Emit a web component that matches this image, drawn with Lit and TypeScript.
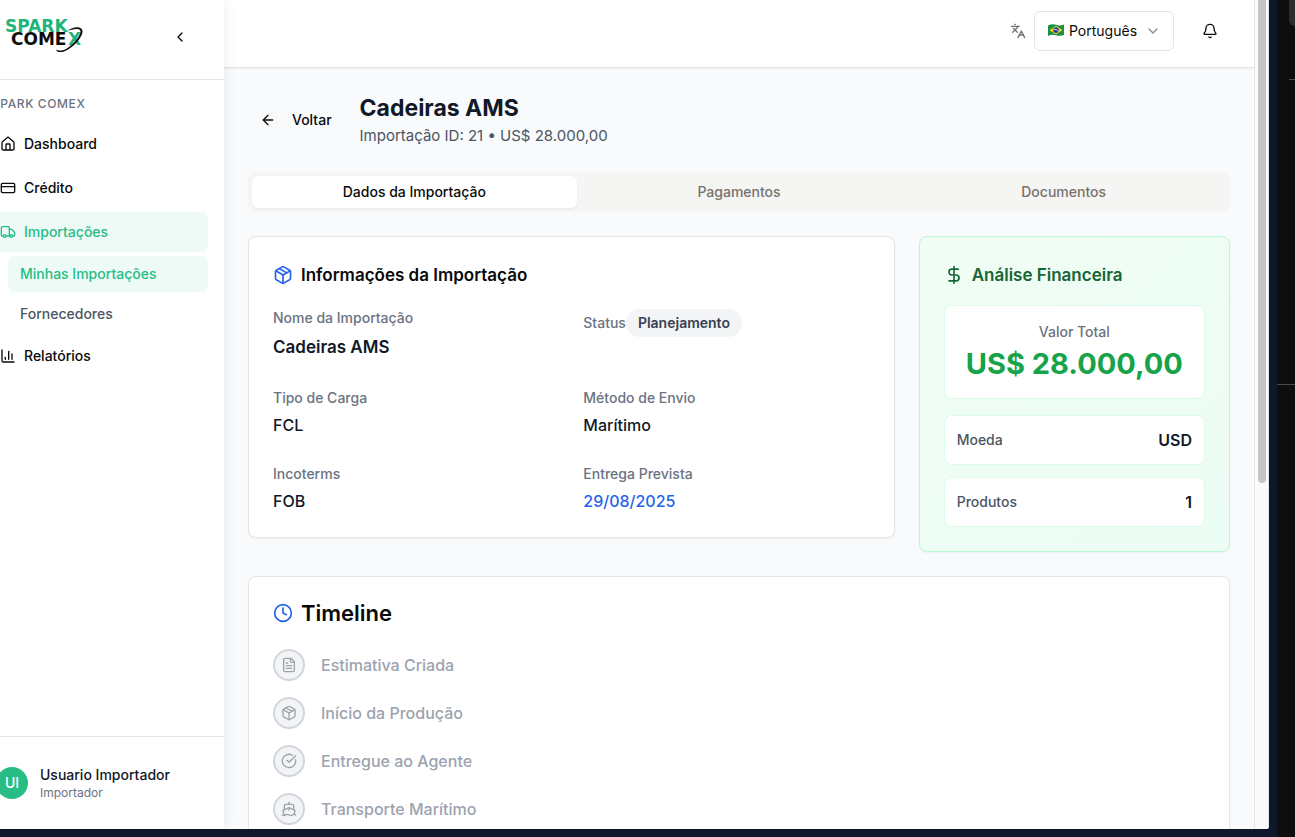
import { LitElement, html, css, svg, nothing } from "lit";
import { customElement, state } from "lit/decorators.js";

const paths = {
  house: svg`<path d="M15 21v-8a1 1 0 0 0-1-1h-4a1 1 0 0 0-1 1v8"/><path d="M3 10a2 2 0 0 1 .709-1.528l7-6a2 2 0 0 1 2.582 0l7 6A2 2 0 0 1 21 10v9a2 2 0 0 1-2 2H5a2 2 0 0 1-2-2z"/>`,
  card: svg`<rect width="20" height="14" x="2" y="5" rx="2"/><path d="M2 10h20"/>`,
  truck: svg`<path d="M14 18V6a2 2 0 0 0-2-2H4a2 2 0 0 0-2 2v11a1 1 0 0 0 1 1h2"/><path d="M15 18H9"/><path d="M19 18h2a1 1 0 0 0 1-1v-3.65a1 1 0 0 0-.22-.624l-3.48-4.35A1 1 0 0 0 17.52 8H14"/><circle cx="17" cy="18" r="2"/><circle cx="7" cy="18" r="2"/>`,
  chart: svg`<path d="M3 3v16a2 2 0 0 0 2 2h16"/><path d="M18 17V9"/><path d="M13 17V5"/><path d="M8 17v-3"/>`,
  chevronLeft: svg`<path d="m15 18-6-6 6-6"/>`,
  chevronDown: svg`<path d="m6 9 6 6 6-6"/>`,
  languages: svg`<path d="m5 8 6 6"/><path d="m4 14 6-6 2-3"/><path d="M2 5h12"/><path d="M7 2h1"/><path d="m22 22-5-10-5 10"/><path d="M14 18h6"/>`,
  bell: svg`<path d="M10.268 21a2 2 0 0 0 3.464 0"/><path d="M3.262 15.326A1 1 0 0 0 4 17h16a1 1 0 0 0 .74-1.673C19.41 13.956 18 12.499 18 8A6 6 0 0 0 6 8c0 4.499-1.411 5.956-2.738 7.326"/>`,
  arrowLeft: svg`<path d="m12 19-7-7 7-7"/><path d="M19 12H5"/>`,
  box: svg`<path d="M11 21.73a2 2 0 0 0 2 0l7-4A2 2 0 0 0 21 16V8a2 2 0 0 0-1-1.73l-7-4a2 2 0 0 0-2 0l-7 4A2 2 0 0 0 3 8v8a2 2 0 0 0 1 1.73z"/><path d="M12 22V12"/><path d="m3.3 7 8.7 5 8.7-5"/><path d="m7.5 4.27 9 5.15"/>`,
  dollar: svg`<path d="M12 2v20"/><path d="M17 5H9.5a3.5 3.5 0 0 0 0 7h5a3.5 3.5 0 0 1 0 7H6"/>`,
  clock: svg`<circle cx="12" cy="12" r="10"/><path d="M12 6v6l4 2"/>`,
  file: svg`<path d="M15 2H6a2 2 0 0 0-2 2v16a2 2 0 0 0 2 2h12a2 2 0 0 0 2-2V7Z"/><path d="M14 2v4a2 2 0 0 0 2 2h4"/><path d="M10 9H8"/><path d="M16 13H8"/><path d="M16 17H8"/>`,
  check: svg`<path d="M21.801 10A10 10 0 1 1 17 3.335"/><path d="m9 11 3 3L22 4"/>`,
  ship: svg`<path d="M12 10.189V14"/><path d="M12 2v3"/><path d="M19 13V7a2 2 0 0 0-2-2H7a2 2 0 0 0-2 2v6"/><path d="M19.38 20A11.6 11.6 0 0 0 21 14l-8.188-3.639a2 2 0 0 0-1.624 0L3 14a11.6 11.6 0 0 0 2.81 7.76"/><path d="M2 21c.6.5 1.2 1 2.5 1 2.5 0 2.5-2 5-2 1.3 0 1.9.5 2.5 1s1.2 1 2.5 1c2.5 0 2.5-2 5-2 1.3 0 1.9.5 2.5 1"/>`,
};
type IconName = keyof typeof paths;

const icon = (name: IconName, size = 16) => html`
  <svg class="icon" width=${size} height=${size} viewBox="0 0 24 24" fill="none" stroke="currentColor"
    stroke-width="2" stroke-linecap="round" stroke-linejoin="round" aria-hidden="true">${paths[name]}</svg>`;

const base = css`
  * { box-sizing: border-box; margin: 0; }
  :host { font-family: Inter, "Liberation Sans", sans-serif; }
  button, select { font: inherit; color: inherit; background: none; border: 0; padding: 0; }
  a { color: inherit; text-decoration: none; }
  ul { list-style: none; padding: 0; }
  .icon { display: block; flex: none; }
`;

@customElement("side-bar")
export class SideBar extends LitElement {
  static styles = [base, css`
    :host { display: flex; flex-direction: column; background: #fff; color: #0a0a0a; font-size: 14px; line-height: 20px; }
    .head { display: flex; align-items: center; justify-content: space-between; height: 80px; padding: 0 24px 5px; border-bottom: 1px solid #e5e5e5; }
    .toggle { display: grid; place-items: center; width: 40px; height: 40px; }
    .logo text { font: 700 17px "DejaVu Sans", sans-serif; }
    nav { flex: 1; padding: 16px; }
    h2 { font-size: 12px; line-height: 16px; font-weight: 500; color: #6b7280; padding: 0 8px; margin-bottom: 12px; letter-spacing: 0.05em; text-transform: uppercase; }
    ul { display: grid; gap: 4px; }
    .item { display: flex; align-items: center; gap: 8px; height: 40px; padding: 0 16px; border-radius: 6px; font-weight: 500; }
    .sub { margin: 4px 0 0 24px; }
    .sub .item { height: 36px; padding: 0 12px; color: #4b5563; }
    .item.active, .sub .item.active { background: #eefaf6; color: #27bd85; }
    .foot { border-top: 1px solid #e5e5e5; padding: 16px; }
    .user { display: flex; align-items: center; gap: 12px; padding: 12px; }
    .avatar { display: grid; place-items: center; width: 32px; height: 32px; border-radius: 50%; background: #27bd85; color: #fff; font-weight: 500; }
    .name { font-weight: 500; color: #111827; }
    .role { font-size: 12px; line-height: 16px; color: #6b7280; }
  `];

  render() {
    return html`
      <div class="head">
        <svg class="logo" width="92" height="40" viewBox="0 0 92 40" role="img" aria-label="Spark Comex">
          <text x="13" y="15" fill="#1fb47c">SPARK</text>
          <text x="19" y="28" fill="#0d0d0d">COME<tspan x="76" fill="#1fb47c">X</tspan></text>
          <path d="M75 14C81 9.500 90 8.500 90.500 14C91 21 78 34 70 35C66 35.300 64 34.500 64.500 32.500C66 34 70 34 74 32C82 27 89 18 88.500 14C88 10.500 80 12 75 14Z" fill="#0d0d0d"/>
        </svg>
        <button class="toggle" aria-label="Recolher menu">${icon("chevronLeft")}</button>
      </div>
      <nav>
        <h2>Spark Comex</h2>
        <ul>
          <li><a class="item" href="#">${icon("house")}Dashboard</a></li>
          <li><a class="item" href="#">${icon("card")}Crédito</a></li>
          <li>
            <a class="item active" href="#">${icon("truck")}Importações</a>
            <ul class="sub">
              <li><a class="item active" href="#">Minhas Importações</a></li>
              <li><a class="item" href="#">Fornecedores</a></li>
            </ul>
          </li>
          <li><a class="item" href="#">${icon("chart")}Relatórios</a></li>
        </ul>
      </nav>
      <div class="foot">
        <div class="user">
          <span class="avatar">UI</span>
          <div>
            <p class="name">Usuario Importador</p>
            <p class="role">Importador</p>
          </div>
        </div>
      </div>`;
  }
}

@customElement("top-bar")
export class TopBar extends LitElement {
  static styles = [base, css`
    :host { display: flex; align-items: center; justify-content: flex-end; gap: 16px; padding: 11px 24px 16px; background: #fff; border-bottom: 1px solid #e5e5e5; box-shadow: 0 1px 2px rgb(0 0 0 / 5%); color: #0a0a0a; font-size: 14px; line-height: 20px; }
    .lang { display: flex; align-items: center; gap: 8px; color: #78716c; }
    .field { display: flex; align-items: center; gap: 4px; width: 140px; height: 40px; padding: 0 12px; border: 1px solid #e5e5e5; border-radius: 6px; background: #fff; }
    select { appearance: none; flex: 1; min-width: 0; height: 100%; color: #0a0a0a; }
    .field .icon { color: #8a8a8a; }
    .flag { flex: none; }
    .bell { display: grid; place-items: center; width: 40px; height: 40px; }
  `];

  render() {
    return html`
      <div class="lang">
        ${icon("languages")}
        <label class="field">
          <svg class="flag" width="18" height="14" viewBox="0 0 18 14" aria-hidden="true">
            <path d="M1 1.500Q5 -.5 9 .8T17 .5V11Q13 12.500 9 11.300T1 12Z" fill="#1a8f45"/>
            <path d="M9 1.800 15.500 6 9 10.400 2.500 6.200Z" fill="#f7d117"/>
            <circle cx="9" cy="6.100" r="2.800" fill="#28409a"/>
            <path d="M6.500 5.300Q9.500 4.900 11.500 7.300" fill="none" stroke="#fff" stroke-width=".7"/>
          </svg>
          <select aria-label="Idioma"><option>Português</option></select>
          ${icon("chevronDown")}
        </label>
      </div>
      <button class="bell" aria-label="Notificações">${icon("bell")}</button>`;
  }
}

const details = [
  { label: "Tipo de Carga", value: "FCL" },
  { label: "Método de Envio", value: "Marítimo" },
  { label: "Incoterms", value: "FOB" },
  { label: "Entrega Prevista", value: "29/08/2025", link: true },
];

const steps: { icon: IconName; label: string }[] = [
  { icon: "file", label: "Estimativa Criada" },
  { icon: "box", label: "Início da Produção" },
  { icon: "check", label: "Entregue ao Agente" },
  { icon: "ship", label: "Transporte Marítimo" },
];

@customElement("import-details")
export class ImportDetails extends LitElement {
  @state() private tab = 0;

  static styles = [base, css`
    :host { display: flex; flex-direction: column; gap: 24px; padding: 24px; color: #111827; font-size: 16px; line-height: 24px; }
    .heading { display: flex; align-items: center; gap: 16px; }
    .back { display: flex; align-items: center; gap: 16px; height: 40px; padding: 0 12px; font-size: 14px; font-weight: 500; color: #0a0a0a; }
    h1 { font-size: 23px; line-height: 32px; font-weight: 700; }
    .subtitle { font-size: 15px; color: #4b5563; }
    .tabs { display: grid; grid-template-columns: repeat(3, 1fr); padding: 4px; border-radius: 8px; background: #f5f5f4; }
    .tab { height: 32px; border-radius: 6px; font-size: 14px; font-weight: 500; color: #78716c; }
    .tab[aria-selected="true"] { background: #fff; color: #0a0a0a; box-shadow: 0 1px 2px rgb(0 0 0 / 6%); }
    .cards { display: grid; grid-template-columns: repeat(3, 1fr); gap: 24px; align-items: start; }
    .card { padding: 24px; border: 1px solid #e5e5e5; border-radius: 8px; background: #fff; box-shadow: 0 1px 2px rgb(0 0 0 / 5%); }
    .info { grid-column: span 2; }
    h2 { display: flex; align-items: center; gap: 8px; margin-bottom: 16px; font-size: 17px; line-height: 28px; font-weight: 600; color: #0a0a0a; white-space: nowrap; }
    h2 .icon { color: #2563eb; }
    .fields { display: grid; grid-template-columns: 1fr 1fr; gap: 24px; }
    dt { font-size: 14px; font-weight: 500; color: #6b7280; }
    dd { font-weight: 500; }
    .field dt { line-height: 26px; }
    .field dd { margin-top: 2px; }
    dd.big { font-size: 17px; line-height: 28px; font-weight: 600; }
    dd.date { color: #2563eb; }
    .status { display: flex; align-items: center; align-self: start; padding-top: 4px; }
    .pill { display: block; padding: 4px 12px; border-radius: 14px; background: #f3f4f6; color: #374151; font-size: 14px; line-height: 20px; font-weight: 600; }
    .finance { border-color: #bbf7d0; background: linear-gradient(135deg, #f0fdf4, #ecfdf5); }
    .finance h2, .finance h2 .icon { color: #166534; }
    .box { border: 1px solid #dcfce7; border-radius: 8px; background: #fff; }
    .total { padding: 16px; margin-bottom: 16px; text-align: center; }
    .total dt { line-height: 20px; }
    .total dd { margin-top: 4px; font-size: 29px; line-height: 36px; font-weight: 700; color: #16a34a; white-space: nowrap; }
    .line { display: flex; justify-content: space-between; padding: 12px; }
    .line + .line { margin-top: 12px; }
    .line dt { color: #4b5563; }
    .line dd { font-weight: 600; }
    .timeline h2 { font-size: 22px; line-height: 24px; margin-bottom: 24px; }
    .steps { display: grid; gap: 16px; }
    .step { display: flex; align-items: center; gap: 16px; color: #9ca3af; font-weight: 500; }
    .dot { display: grid; place-items: center; width: 32px; height: 32px; border: 2px solid #d1d5db; border-radius: 50%; background: #f3f4f6; }
  `];

  render() {
    return html`
      <div class="heading">
        <button class="back">${icon("arrowLeft")}Voltar</button>
        <div>
          <h1>Cadeiras AMS</h1>
          <p class="subtitle">Importação ID: 21 • US$ 28.000,00</p>
        </div>
      </div>
      <div class="tabs" role="tablist">
        ${["Dados da Importação", "Pagamentos", "Documentos"].map((label, i) => html`
          <button class="tab" role="tab" aria-selected=${this.tab === i ? "true" : "false"} @click=${() => (this.tab = i)}>${label}</button>`)}
      </div>
      <div class="cards">
        <section class="card info">
          <h2>${icon("box", 20)}Informações da Importação</h2>
          <dl class="fields">
            <div class="field"><dt>Nome da Importação</dt><dd class="big">Cadeiras AMS</dd></div>
            <div class="status"><dt>Status</dt><dd class="pill">Planejamento</dd></div>
            ${details.map((d) => html`<div class="field"><dt>${d.label}</dt><dd class=${d.link ? "date" : nothing}>${d.value}</dd></div>`)}
          </dl>
        </section>
        <section class="card finance">
          <h2>${icon("dollar", 20)}Análise Financeira</h2>
          <dl>
            <div class="box total"><dt>Valor Total</dt><dd>US$ 28.000,00</dd></div>
            <div class="box line"><dt>Moeda</dt><dd>USD</dd></div>
            <div class="box line"><dt>Produtos</dt><dd>1</dd></div>
          </dl>
        </section>
      </div>
      <section class="card timeline">
        <h2>${icon("clock", 20)}Timeline</h2>
        <ul class="steps">
          ${steps.map((s) => html`<li class="step"><span class="dot">${icon(s.icon)}</span>${s.label}</li>`)}
        </ul>
      </section>`;
  }
}

@customElement("app-root")
export class AppRoot extends LitElement {
  static styles = [base, css`
    :host { display: grid; grid-template-columns: 1fr 18px; height: 100vh; overflow: hidden; background: #0f172a; }
    .window { display: grid; grid-template-columns: 224px 1fr 15px; min-height: 0; margin: 0 8px 8px 0; overflow: hidden; border-radius: 0 0 3px 0; background: #f9fafb; }
    side-bar { width: 256px; margin-left: -32px; z-index: 1; box-shadow: 0 0 14px rgb(0 0 0 / 8%); }
    main { min-width: 0; min-height: 0; overflow: hidden; }
    .track { border: solid #e5e5e5; border-width: 0 1px; background: #fafafa; padding: 0 2px 0 3px; }
    .thumb { height: 483px; border-radius: 0 0 4px 4px; background: #c5c5c5; }
    .behind { display: grid; grid-template-rows: 80px 305px 1fr; background: #0e0e0e; }
    .behind > * { border-bottom: 1px solid #4a4a4a; }
    .corner { margin-left: 12px; }
    .chip { height: 26px; border-radius: 0 0 0 8px; background: #2d2d2d; }
  `];

  render() {
    return html`
      <div class="window">
        <side-bar></side-bar>
        <main>
          <top-bar></top-bar>
          <import-details></import-details>
        </main>
        <div class="track" aria-hidden="true"><div class="thumb"></div></div>
      </div>
      <div class="behind" aria-hidden="true">
        <div class="corner"><div class="chip"></div></div>
        <div></div>
      </div>`;
  }
}
